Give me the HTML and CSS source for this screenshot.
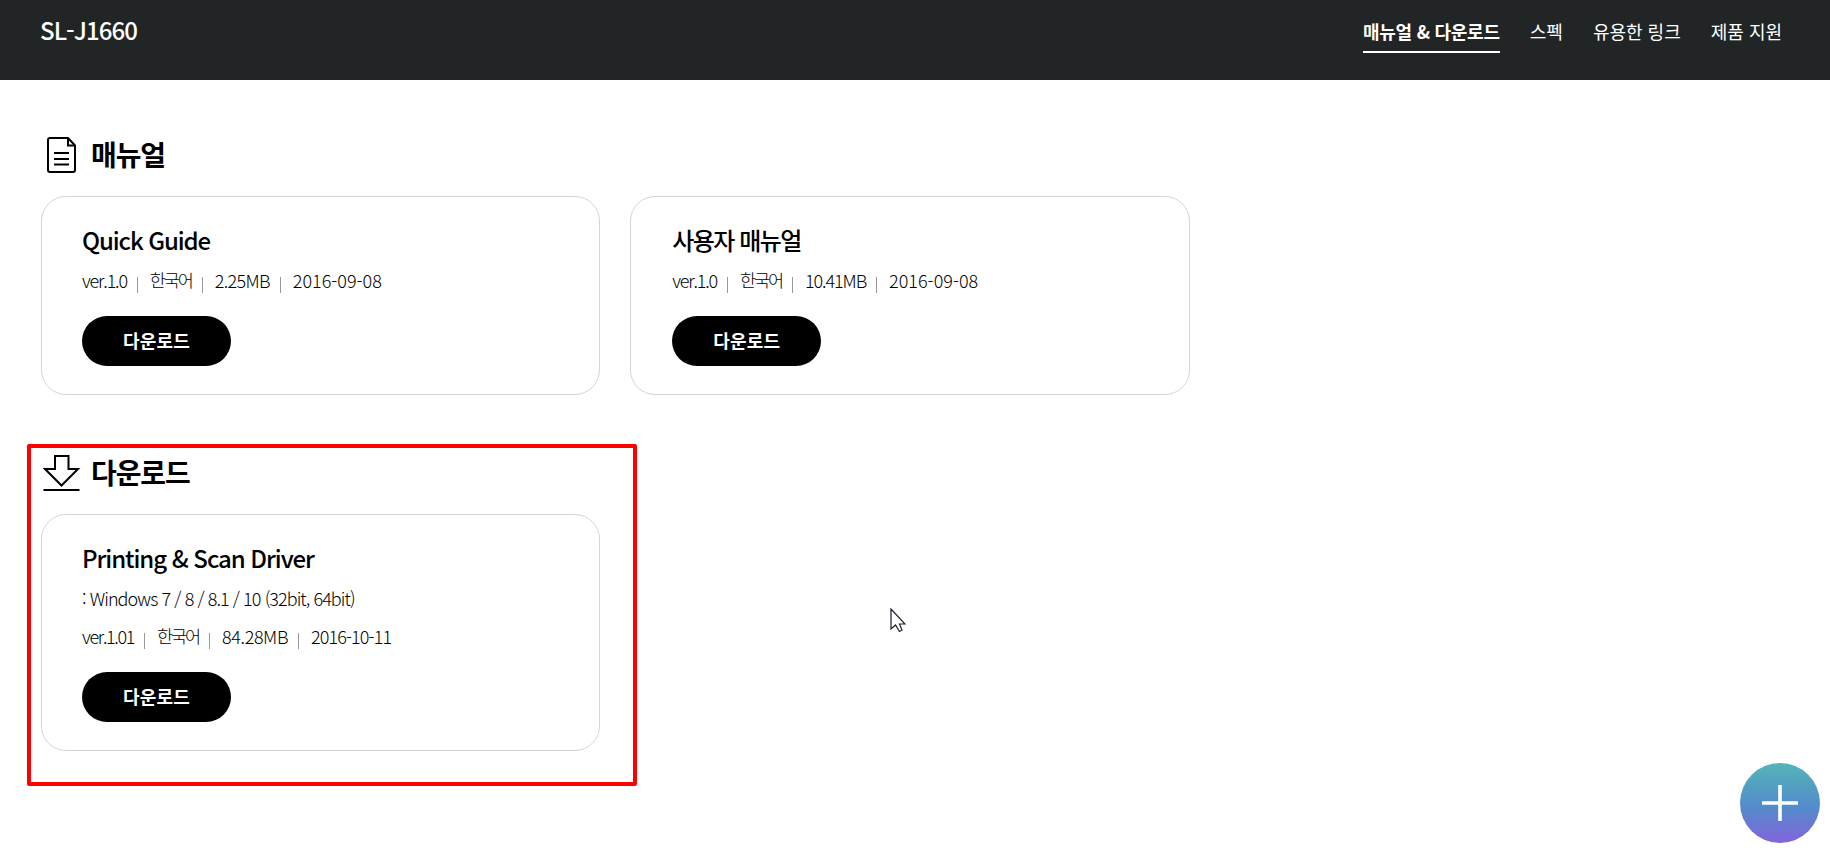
FILE: index.html
```
<!DOCTYPE html>
<html lang="ko">
<head>
    <meta charset="UTF-8">
    <title>SL-J1660</title>
    <link rel="stylesheet" href="styles.css">
</head>
<body>
<header class="header">
    <div class="model">SL-J1660</div>
    <nav class="nav">
        <a class="nav-link active">매뉴얼 &amp; 다운로드</a>
        <a class="nav-link">스펙</a>
        <a class="nav-link">유용한 링크</a>
        <a class="nav-link">제품 지원</a>
    </nav>
</header>
<main class="content">
    <section class="section">
        <h2 class="section-title">
            <svg class="section-icon" viewBox="0 0 40 40">
                <path d="M9 3H27L34 10.500V35a2 2 0 0 1-2 2H9a2 2 0 0 1-2-2V5a2 2 0 0 1 2-2Z"/>
                <path d="M27 3V10.500H34"/>
                <path d="M13 18H28M13 24H28M13 29.500H28"/>
            </svg>
            <span class="section-name">매뉴얼</span>
        </h2>
        <div class="cards">
            <div class="card">
                <h3 class="card-title">Quick Guide</h3>
                <ul class="meta">
                    <li class="ver">ver.1.0</li>
                    <li class="lang">한국어</li>
                    <li class="size">2.25MB</li>
                    <li class="date">2016-09-08</li>
                </ul>
                <button class="btn">다운로드</button>
            </div>
            <div class="card manual">
                <h3 class="card-title">사용자 매뉴얼</h3>
                <ul class="meta">
                    <li class="ver">ver.1.0</li>
                    <li class="lang">한국어</li>
                    <li class="size">10.41MB</li>
                    <li class="date">2016-09-08</li>
                </ul>
                <button class="btn">다운로드</button>
            </div>
        </div>
    </section>
    <section class="section">
        <h2 class="section-title">
            <svg class="section-icon" viewBox="0 0 40 40">
                <path d="M14 3H27.500V16H37L20.500 32.500L4 16H14Z"/>
                <path d="M2.500 37H38.500"/>
            </svg>
            <span class="section-name">다운로드</span>
        </h2>
        <div class="cards">
            <div class="card driver">
                <h3 class="card-title">Printing &amp; Scan Driver</h3>
                <p class="os">: Windows 7 / 8 / 8.1 / 10 (32bit, 64bit)</p>
                <ul class="meta">
                    <li class="ver">ver.1.01</li>
                    <li class="lang">한국어</li>
                    <li class="size">84.28MB</li>
                    <li class="date">2016-10-11</li>
                </ul>
                <button class="btn">다운로드</button>
            </div>
        </div>
        <div class="highlight"></div>
    </section>
</main>
<button class="fab">
    <svg width="80" height="80" viewBox="0 0 80 80">
        <path d="M40 22V58M22 40H58" stroke="#fff" stroke-width="3.600"/>
    </svg>
</button>
<svg class="cursor" width="16" height="25" viewBox="0 0 16 25">
    <path d="M1 1V21L5.500 17L9.500 23.500L12 22L9.500 16H15Z" fill="#fff" stroke="#1c1c2c" stroke-width="1.200"/>
</svg>
</body>
</html>
```
FILE: styles.css
```
* {
    box-sizing: border-box;
}

body {
    margin: 0;
    height: 856px;
    overflow: hidden;
    position: relative;
    background: #fff;
    color: #000;
    font-family: "Noto Sans CJK KR", sans-serif;
}

h2, h3, p, ul {
    margin: 0;
    padding: 0;
}

.header {
    display: flex;
    justify-content: space-between;
    height: 80px;
    padding: 12px 48px 0 40px;
    background: #212526;
    color: #fff;
}

.model {
    font-size: 24px;
    font-weight: 500;
    line-height: 35px;
    letter-spacing: -0.95px;
}

.nav {
    display: flex;
    gap: 30px;
}

.nav-link {
    height: 41px;
    font-size: 18px;
    font-weight: 400;
    line-height: 38px;
    white-space: nowrap;
}

.nav-link.active {
    font-weight: 700;
    letter-spacing: -0.25px;
    border-bottom: 2px solid #fff;
}

.content {
    padding: 55px 41px 0;
}

.section {
    position: relative;
    margin-bottom: 58px;
}

.section-title {
    display: flex;
    gap: 10px;
    height: 40px;
    margin-bottom: 21px;
    font-size: 28px;
    font-weight: 700;
    line-height: 38px;
    letter-spacing: -1.1px;
}

.section-icon {
    width: 40px;
    height: 40px;
    fill: none;
    stroke: #000;
    stroke-width: 2;
}

.cards {
    display: flex;
    gap: 29.8px;
}

.card {
    width: 559.4px;
    padding: 25px 40px 28px;
    border: 1px solid #d5d5d5;
    border-radius: 25px;
}

.card-title {
    font-size: 24px;
    font-weight: 500;
    line-height: 36px;
    letter-spacing: -1.1px;
    margin-bottom: 8px;
}

.os {
    margin-bottom: 10px;
    font-size: 18px;
    font-weight: 300;
    line-height: 28px;
    letter-spacing: -0.93px;
}

.meta {
    display: flex;
    list-style: none;
    margin-bottom: 22px;
    font-size: 18px;
    font-weight: 300;
    line-height: 28px;
}

.meta li {
    display: flex;
    align-items: center;
}

.meta li + li::before {
    content: "";
    width: 1px;
    height: 16px;
    margin: 10px 12px 0 10px;
    background: #999;
}

.ver {
    letter-spacing: -1.2px;
}

.meta .lang {
    font-size: 17.5px;
    letter-spacing: -2.1px;
}

.size {
    letter-spacing: -0.7px;
}

.manual {
    padding-left: 41px;
}

.manual .card-title {
    letter-spacing: -1.5px;
}

.manual .size {
    letter-spacing: -1.1px;
}

.driver .card-title {
    letter-spacing: -1.05px;
}

.driver .ver {
    letter-spacing: -1.35px;
}

.driver .size {
    letter-spacing: -0.4px;
}

.driver .date {
    letter-spacing: -0.9px;
}

.btn {
    display: block;
    width: 149px;
    height: 50px;
    padding: 0 0 2px;
    border: 0;
    border-radius: 25px;
    background: #000;
    color: #fff;
    font-family: inherit;
    font-size: 18px;
    font-weight: 700;
    letter-spacing: 0.2px;
}

/* red frame round the download block */
.highlight {
    position: absolute;
    top: -9px;
    left: -14px;
    width: 610px;
    height: 342px;
    border: 4px solid #f00;
    border-radius: 2px;
}

.fab {
    position: absolute;
    top: 763px;
    left: 1740px;
    width: 80px;
    height: 80px;
    padding: 0;
    border: 0;
    border-radius: 50%;
    background: linear-gradient(#54b4b8, #528ccb 55%, #8464dc);
}

.cursor {
    position: absolute;
    top: 608px;
    left: 890px;
}
```
